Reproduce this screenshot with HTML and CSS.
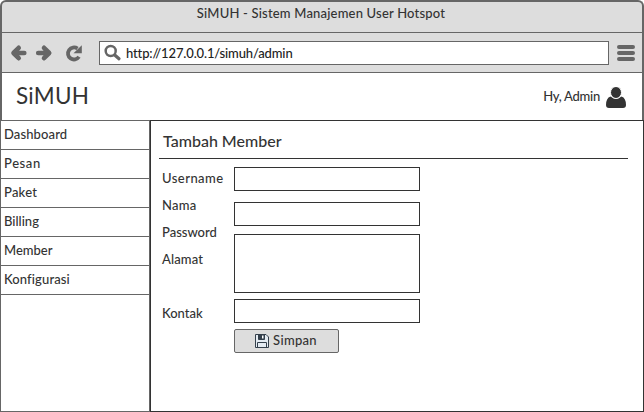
FILE: index.html
```
<!DOCTYPE html>
<html lang="id">
<head>
<meta charset="utf-8">
<title>SiMUH - Sistem Manajemen User Hotspot</title>
<link rel="stylesheet" href="styles.css">
</head>
<body>
<div class="browser">
  <div class="titlebar"><span class="wtitle">SiMUH - Sistem Manajemen User Hotspot</span></div>
  <div class="toolbar">
    <svg class="nav" width="76" height="20" viewBox="0 0 76 20" fill="none" stroke="#666" stroke-width="4.600" stroke-linecap="round" stroke-linejoin="round">
      <path d="M5 10H15.300M9.700 4.800L4.500 10l5.200 5.200"/>
      <path d="M29.200 10h10.500M35 4.800l5.200 5.200-5.200 5.200"/>
      <path d="M70 13.800a6 6 0 1 1-1.500-8.200" stroke-width="3.800" stroke-linecap="butt"/>
      <path d="M72.800 2.300v8h-8.300z" fill="#666" stroke="none"/>
    </svg>
    <div class="url">
      <svg width="18" height="18" viewBox="0 0 18 18" fill="none" stroke="#666"><circle cx="6.700" cy="7" r="5" stroke-width="2.500"/><path d="M11 11.200l4 3.600" stroke-width="3.200" stroke-linecap="round"/></svg>
      <span class="address">http://127.0.0.1/simuh/admin</span>
    </div>
    <svg class="burger" width="18" height="16" viewBox="0 0 18 16" stroke="#666" stroke-width="4" stroke-linecap="round"><path d="M2 2h14M2 8h14M2 14h14"/></svg>
  </div>
  <header class="header">
    <h1 class="brand">SiMUH</h1>
    <div class="user"><span class="hello">Hy, Admin</span>
      <svg width="20" height="21" viewBox="0 0 20 21"><path fill="#333" d="M4.500 9.500Q10 14 15.500 9.500Q20 11 20 18Q20 21 17 21H3Q0 21 0 18Q0 11 4.500 9.500z"/><ellipse cx="10" cy="5.500" rx="5.500" ry="6" fill="#333" stroke="#fff" stroke-width="1"/></svg>
    </div>
  </header>
</div>
<div class="page">
  <nav class="menu">
    <a class="ls-s">Dashboard</a><a class="ls-xl">Pesan</a><a class="ls-m">Paket</a><a>Billing</a><a>Member</a><a class="ls-s">Konfigurasi</a>
  </nav>
  <main class="content">
    <h2 class="heading">Tambah Member</h2>
    <form class="form">
      <div class="labels"><label class="ls-l">Username</label><label class="ls-m">Nama</label><label>Password</label><label class="ls-s">Alamat</label><label class="last">Kontak</label></div>
      <div class="fields">
        <input class="field username"><input class="field nama"><textarea class="field alamat"></textarea><input class="field kontak">
        <button class="save" type="button">
          <svg width="14" height="14" viewBox="0 0 14 14" fill="none" stroke="#34404c"><path d="M.5.5H11L13.500 3v10.500H.5z" fill="#e4ebf2"/><path d="M3.500.5h6v5h-6z" fill="#34404c"/><path d="M7 1.500h1.500v3H7z" fill="#fff" stroke="none"/><path d="M2.500 13.500V8.500h9v5"/></svg>
          <span>Simpan</span>
        </button>
      </div>
    </form>
  </main>
</div>
</body>
</html>
```
FILE: styles.css
```
* { box-sizing: border-box; }
body { margin: 0; width: 644px; height: 412px; overflow: hidden; background: #fff; color: #333; font: 500 13px/18px Lato, "Liberation Sans", sans-serif; }
h1, h2 { margin: 0; font-weight: 400; }
svg { display: block; flex: none; }
.ls-s { letter-spacing: .12px; }
.ls-m { letter-spacing: .22px; }
.ls-l { letter-spacing: .45px; }
.ls-xl { letter-spacing: .6px; }
.browser { height: 120px; border: 2px solid #666; border-bottom: 0; border-radius: 6px 6px 0 0; overflow: hidden; background: #ddd; }
.titlebar { height: 31px; border-bottom: 1px solid #666; text-align: center; padding: 2px 2px 0 0; letter-spacing: .19px; }
.toolbar { height: 40px; border-bottom: 1px solid #666; display: flex; align-items: center; padding: 0 6px 0 7px; }
.nav { margin-right: 14px; }
.url { width: 510px; height: 24px; border: 1px solid #666; background: #fff; display: flex; align-items: center; padding-left: 4px; gap: 4px; }
.address { letter-spacing: -.14px; color: #222; }
.burger { margin-left: 8px; }
.header { height: 47px; background: #fff; display: flex; align-items: center; justify-content: space-between; padding: 0 16px 0 14px; }
.brand { font-size: 22.500px; line-height: 28px; letter-spacing: .25px; padding-bottom: 1px; }
.user { display: flex; align-items: center; gap: 6px; padding-top: 2px; }
.hello { letter-spacing: -.25px; padding-bottom: 3px; }
.page { height: 292px; display: flex; }
.menu { width: 150px; border: 1px solid #666; display: flex; flex-direction: column; }
.menu a { height: 29px; border-bottom: 1px solid #666; padding: 4px 0 0 3px; }
.content { flex: 1; border: 1px solid #333; padding: 0 15px 0 8px; }
.heading { height: 38px; border-bottom: 1px solid #333; font-size: 16px; font-weight: 500; line-height: 22px; padding: 9px 0 0 4px; }
.form { display: flex; padding-top: 8px; }
.labels { width: 75px; padding: 2px 0 0 3px; display: flex; flex-direction: column; gap: 9px; }
.labels .last { margin-top: 27px; }
.fields { display: flex; flex-direction: column; align-items: flex-start; }
.field { width: 186px; height: 24px; margin: 0; border: 1px solid #333; background: #fff; padding: 3px; font: inherit; resize: none; outline: 0; }
.username { margin-bottom: 11px; }
.nama { margin-bottom: 8px; }
.alamat { height: 59px; margin-bottom: 6px; }
.kontak { margin-bottom: 6px; }
.save { width: 105px; height: 24px; border: 1px solid #666; border-radius: 2px; background: #ddd; color: #333; font: inherit; letter-spacing: .3px; padding: 0 1px 0 0; display: flex; align-items: center; justify-content: center; gap: 4px; }
.save span { padding-bottom: 2px; }
```
